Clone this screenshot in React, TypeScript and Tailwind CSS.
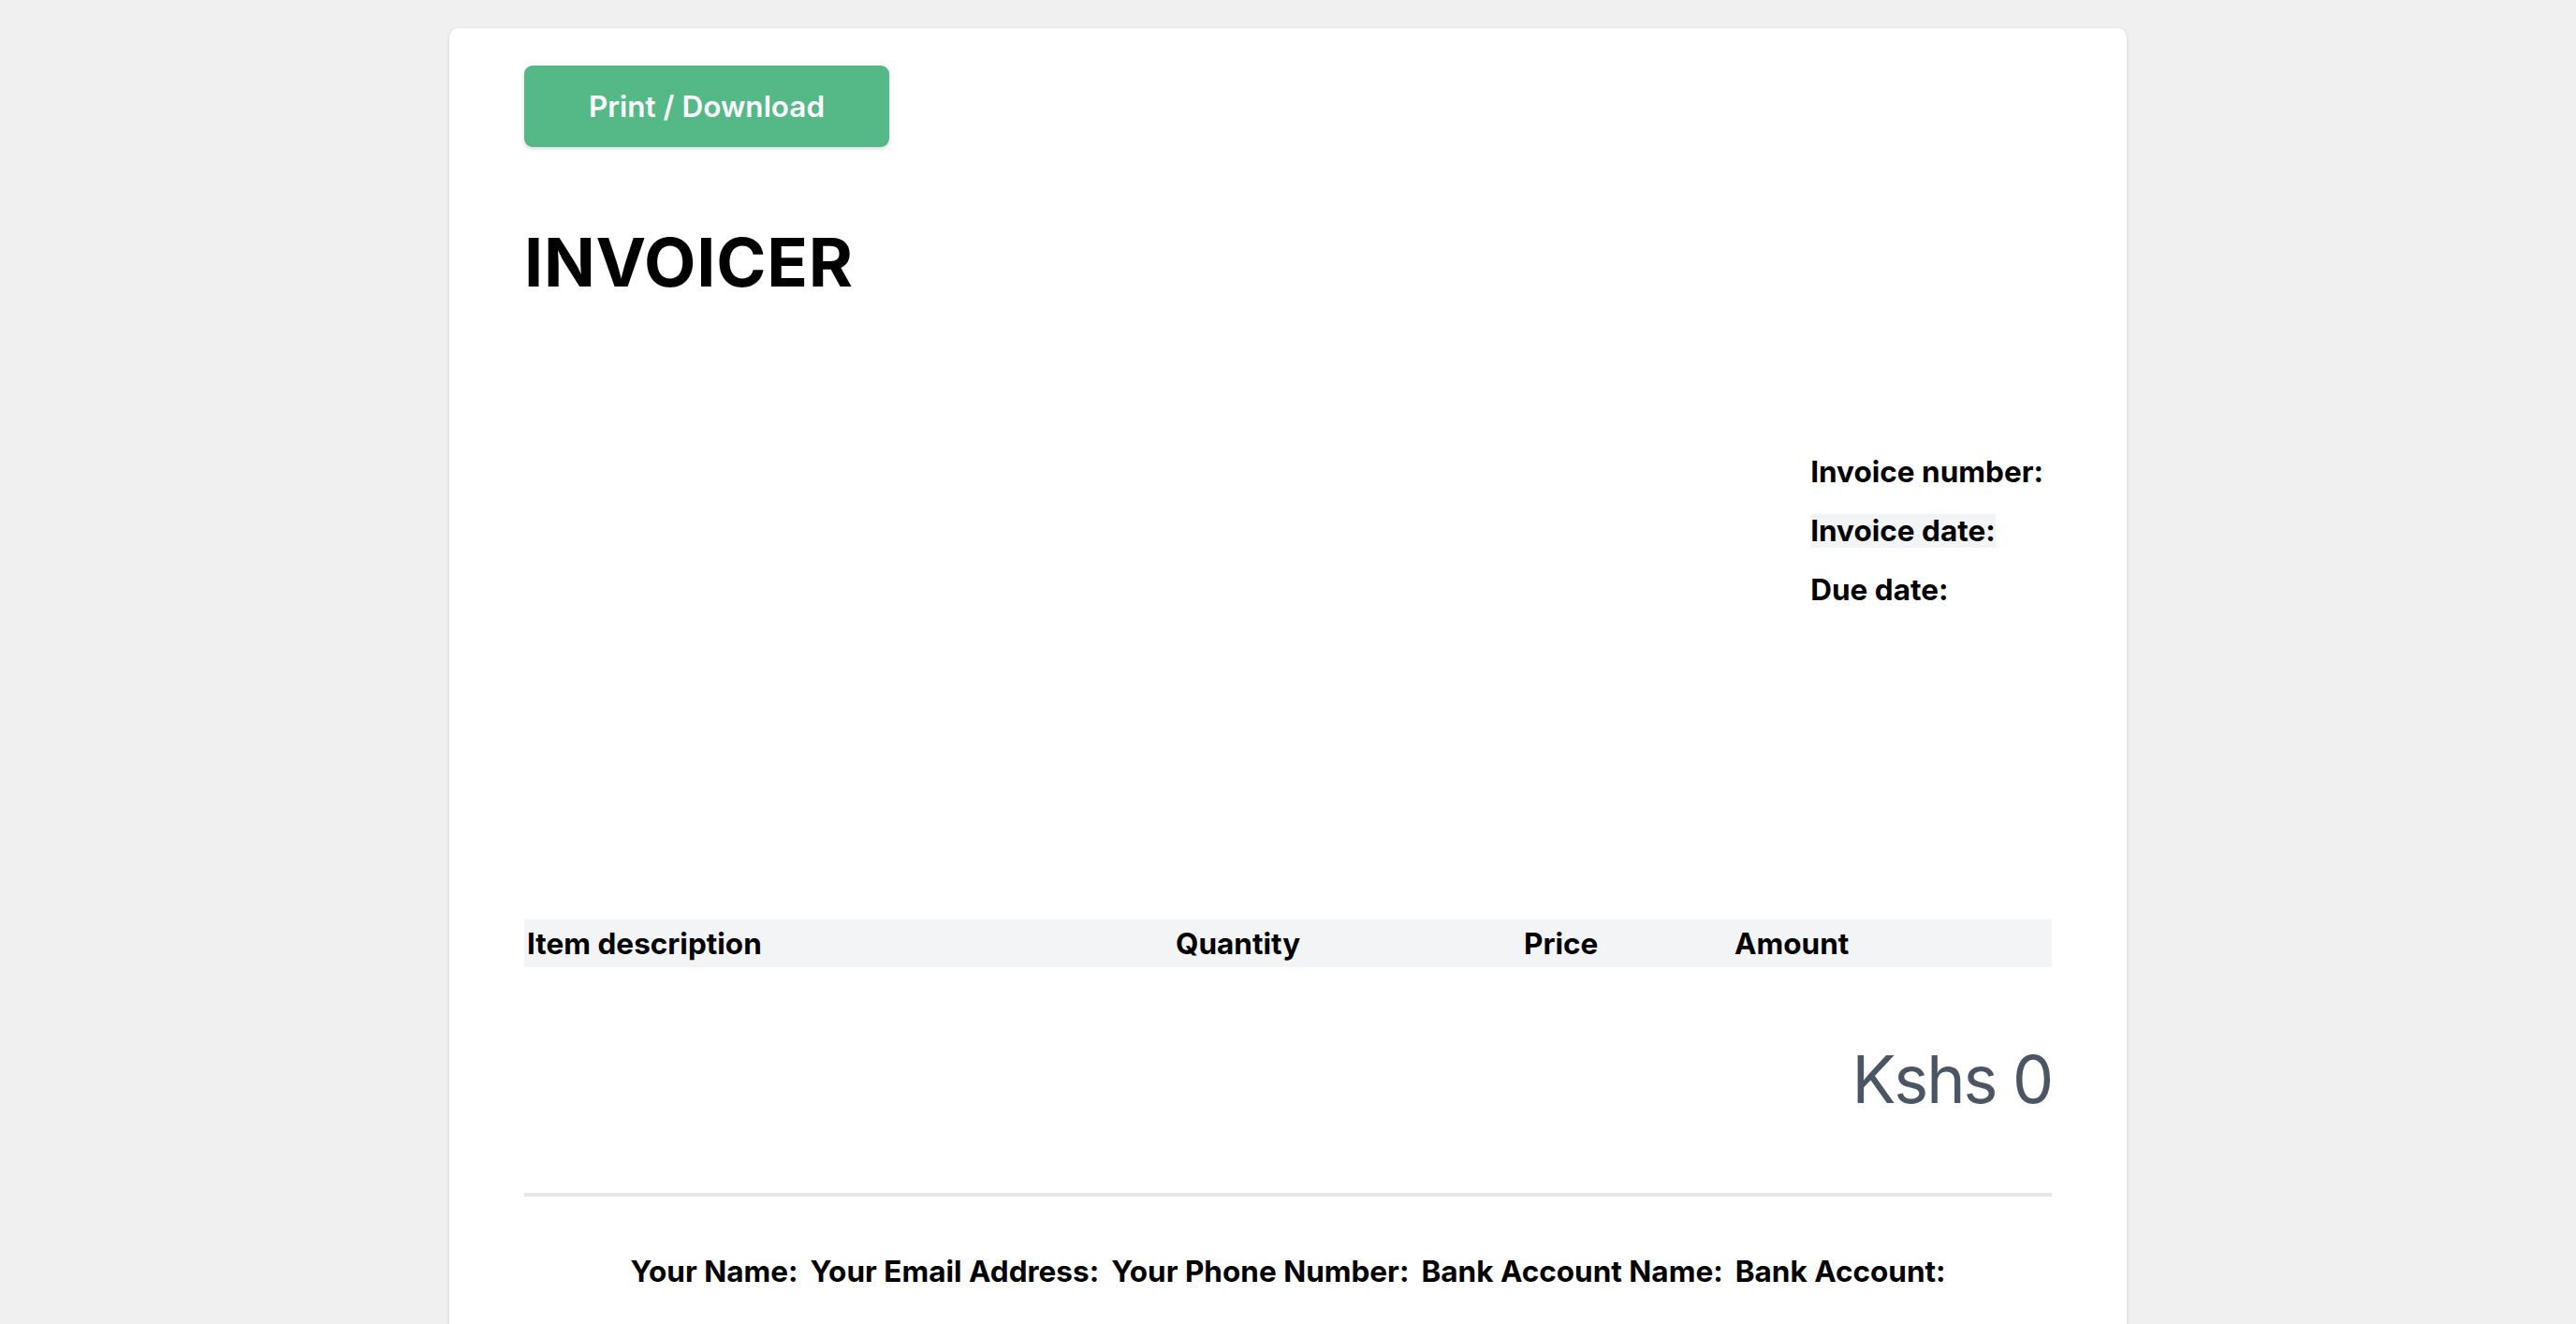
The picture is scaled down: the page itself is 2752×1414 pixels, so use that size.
import React from "react";

export default function App() {
  const footer = [
    "Your Name:",
    "Your Email Address:",
    "Your Phone Number:",
    "Bank Account Name:",
    "Bank Account:",
  ];
  return (
    <div
      className="min-h-screen w-full bg-[#f0f0f0] pt-[30px]"
      style={{ fontFamily: "Inter, 'Noto Sans', sans-serif" }}
    >
      <div className="mx-auto w-[1792px] min-h-[1500px] rounded-[10px] bg-white px-[80px] pt-[40px] shadow-[0_1px_4px_rgba(0,0,0,0.12)]">
        <button className="h-[87px] w-[390px] rounded-[9px] bg-[#54b887] text-[31.5px] font-semibold text-white shadow-[0_2px_4px_rgba(0,0,0,0.15)]">
          Print / Download
        </button>

        <h1 className="mt-[87px] text-[72px] font-bold leading-none tracking-[0.01em] text-black">
          INVOICER
        </h1>

        <div className="mt-[170px] flex justify-end pr-[9px]">
          <div className="flex flex-col gap-[27px] text-[31.5px] font-bold text-black">
            <div className="h-[36px] leading-[36px]">Invoice number:</div>
            <div className="h-[36px] leading-[36px]">
              <span className="inline-block bg-[#f3f4f6]">Invoice date:</span>
            </div>
            <div className="h-[36px] leading-[36px]">Due date:</div>
          </div>
        </div>

        <div className="mt-[334px] grid h-[51px] grid-cols-[696px_372px_225px_1fr] items-center bg-[#f3f4f6] text-[31.5px] font-bold text-black">
          <div className="pl-[3px]">Item description</div>
          <div>Quantity</div>
          <div>Price</div>
          <div>Amount</div>
        </div>

        <div className="mt-[85px] text-right text-[70px] font-normal leading-none tracking-[-0.03em] text-[#4b5563]">
          Kshs 0
        </div>

        <div className="mt-[86px] border-t-4 border-[#e5e7eb]" />

        <div className="mt-[64px] flex justify-center gap-[13px] text-[31.5px] font-bold leading-none text-black">
          {footer.map((f) => (
            <span key={f}>{f}</span>
          ))}
        </div>
      </div>
    </div>
  );
}
